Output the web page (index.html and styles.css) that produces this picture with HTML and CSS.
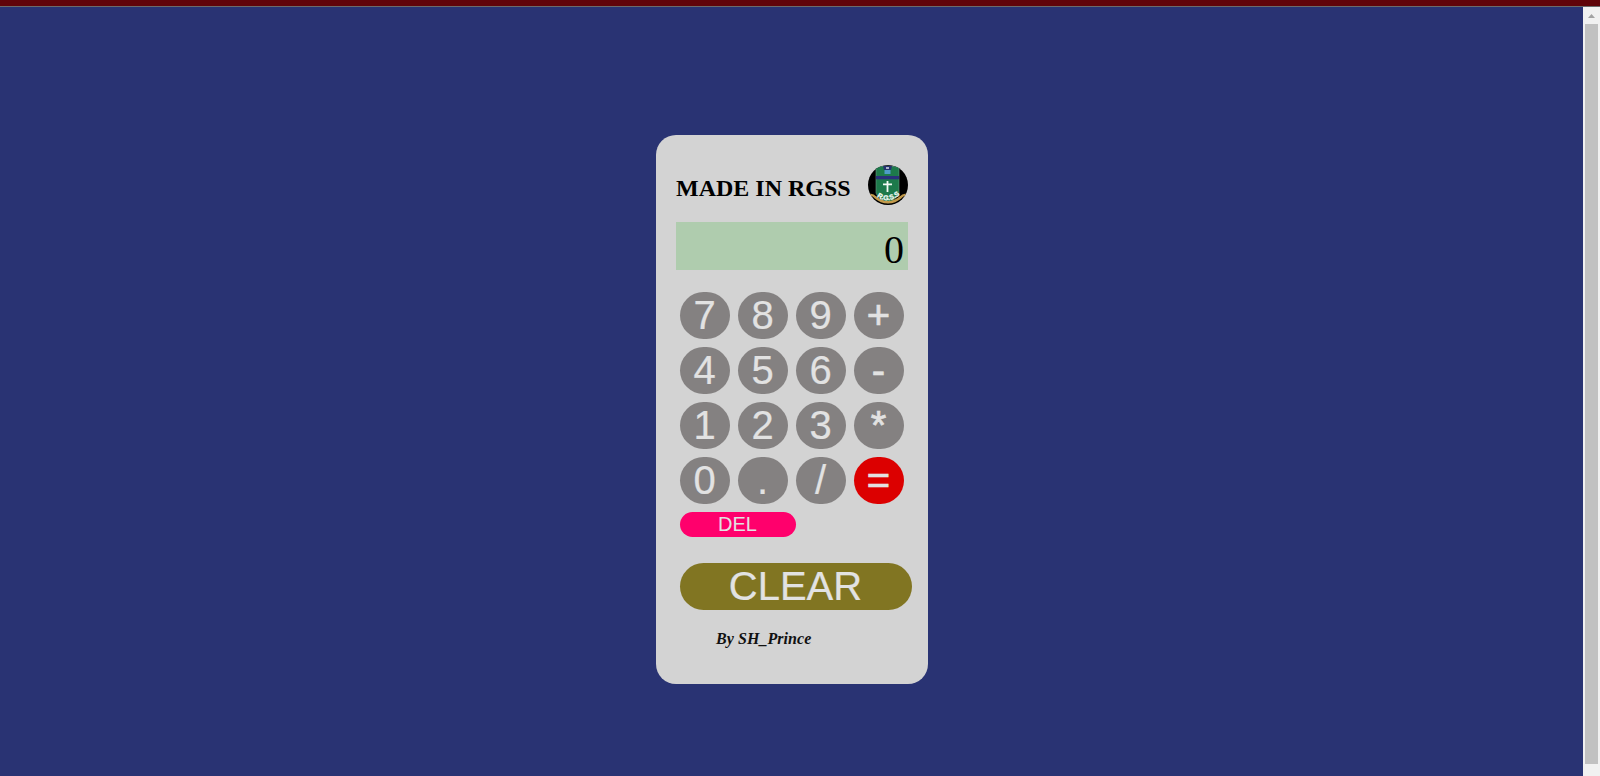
FILE: index.html
```
<!DOCTYPE html>
<html lang="en">
<head>
<meta charset="utf-8">
<title>Calculator</title>
<link rel="stylesheet" href="styles.css">
</head>
<body>
<div class="topbar"></div>
<div class="view">
  <main class="stage">
    <section class="calculator">
      <header class="head">
        <h1 class="title">MADE IN RGSS</h1>
        <svg class="logo" viewBox="0 0 40 40">
          <defs>
            <clipPath id="round"><circle cx="20" cy="20" r="20"/></clipPath>
            <path id="arc" d="M6 29Q19.500 42.500 35 27"/>
          </defs>
          <g clip-path="url(#round)">
            <rect width="40" height="40" fill="#000"/>
            <path d="M8 2Q19 0 31 2V28Q29 34 20 38Q10 34 8 28Z" fill="#1d7a4b" stroke="#6b9d88" stroke-width=".6"/>
            <path d="M15 1H24L23 5H16Z" fill="#25336f"/>
            <path d="M16.500 5H22.500V9H16.500Z" fill="#4e9cc8"/>
            <path d="M18 3H21" stroke="#d5dde6" stroke-width="1.4"/>
            <path d="M8 11H31V14.200H8Z" fill="#29317a"/>
            <path d="M19.500 16V27M15 19.300H24" stroke="#f4faf5" stroke-width="1.8"/>
            <path d="M2 30Q5 29.500 7 32Q13 37.300 20 37.300Q27 37.300 33 32Q35 29.500 38 30" fill="none" stroke="#c29a4b" stroke-width="2.400"/>
          </g>
          <text class="logo-text"><textPath href="#arc" startOffset="50%" text-anchor="middle">R.G.S.S</textPath></text>
        </svg>
      </header>
      <div class="display">0</div>
      <div class="keys">
        <button class="key">7</button><button class="key">8</button><button class="key">9</button><button class="key operator">+</button>
        <button class="key">4</button><button class="key">5</button><button class="key">6</button><button class="key operator">-</button>
        <button class="key">1</button><button class="key">2</button><button class="key">3</button><button class="key operator">*</button>
        <button class="key">0</button><button class="key">.</button><button class="key">/</button><button class="key operator equals">=</button>
      </div>
      <button class="key del">DEL</button>
      <button class="key clear">CLEAR</button>
      <p class="credit">By SH_Prince</p>
    </section>
  </main>
  <div class="scrollbar">
    <svg class="arrow" viewBox="0 0 17 17"><path d="M5 11L8.500 7L12 11Z" fill="#a3a3a3"/></svg>
    <div class="thumb"></div>
  </div>
</div>
</body>
</html>
```
FILE: styles.css
```
* { box-sizing: border-box; }
body {
  margin: 0;
  height: 776px;
  overflow: hidden;
  display: flex;
  flex-direction: column;
  background: #293373;
}
.topbar {
  height: 7px;
  flex: none;
  background: #600409;
  border-bottom: 1px solid #6b6b6b;
}
.view { flex: 1; display: flex; }
.stage { flex: 1; padding-top: 128px; }
.calculator {
  width: 272px;
  height: 549px;
  margin-left: 656px;
  padding: 30px 20px 0;
  border-radius: 20px;
  background: #d3d3d3;
}
.head { display: flex; justify-content: space-between; height: 57px; }
.title {
  margin: 9px 0 0;
  font: bold 24px/28px "Liberation Serif", serif;
  white-space: nowrap;
  color: #000;
}
.logo { width: 40px; height: 40px; flex: none; }
.logo-text { font: bold 7px "Liberation Sans", sans-serif; fill: #f4faf5; stroke: #f4faf5; stroke-width: .3px; }
.display {
  height: 48px;
  padding: 5px 4px 0;
  background: #afccae;
  font: 40px/46px "Liberation Serif", serif;
  text-align: right;
}
.keys {
  display: grid;
  grid-template-columns: repeat(4, 50px);
  gap: 8px;
  margin: 22px 4px 8px;
}
.key {
  display: block;
  height: 47px;
  padding: 0 1px 1px 0;
  border: 0;
  border-radius: 25px;
  background: #848181;
  color: #e2e2e2;
  font: 40px/46px "Liberation Sans", Arial, sans-serif;
  text-align: center;
  -webkit-text-stroke: .2px #e2e2e2;
}
.operator { -webkit-text-stroke-width: .7px; }
.equals { background: #dc0000; }
.del {
  width: 116px;
  height: 25px;
  margin-left: 4px;
  padding-bottom: 1px;
  background: #ff006c;
  font-size: 20px;
  line-height: 23px;
  -webkit-text-stroke-width: 0;
}
.clear {
  width: 232px;
  margin: 26px 0 0 4px;
  background: #817522;
}
.credit {
  margin: 19px 0 0 40px;
  font: italic bold 16px/20px "Liberation Serif", serif;
  letter-spacing: .06px;
  color: #111;
}
.scrollbar { width: 17px; background: #f1f1f1; }
.arrow { display: block; width: 17px; height: 17px; }
.thumb { width: 13px; height: 740px; margin-left: 2px; background: #c1c1c1; }
```
